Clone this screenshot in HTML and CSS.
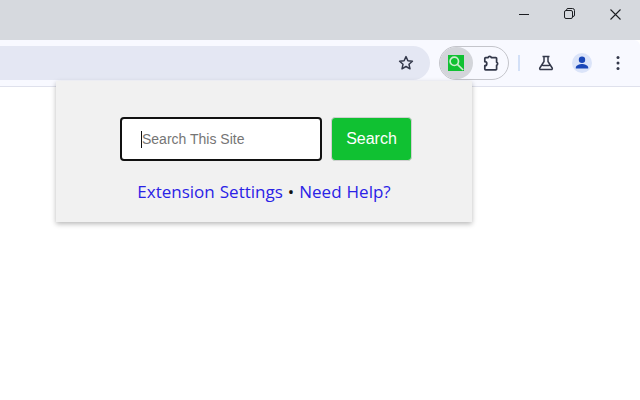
FILE: index.html
```html
<!DOCTYPE html>
<html lang="en">
<head>
<meta charset="utf-8">
<title>Search This Site</title>
<link rel="stylesheet" href="styles.css">
</head>
<body>
<div class="window">
  <header class="titlebar">
    <svg class="winbtn" width="46" height="28" viewBox="0 0 46 28"><path d="M19 14.5h10" fill="none" stroke="#1c1e22" stroke-width="1"/></svg>
    <svg class="winbtn" width="46" height="28" viewBox="0 0 46 28"><rect x="18.5" y="10.5" width="8" height="8" rx="1.5" fill="none" stroke="#1c1e22"/><path d="M20.5 10V9.8a1.5 1.5 0 0 1 1.5-1.3h4.5a2 2 0 0 1 2 2V15a1.5 1.5 0 0 1-1.5 1.5" fill="none" stroke="#1c1e22"/></svg>
    <svg class="winbtn" width="46" height="28" viewBox="0 0 46 28"><path d="M18.5 9.5l10 10M28.5 9.5l-10 10" fill="none" stroke="#1c1e22" stroke-width="1.1"/></svg>
  </header>
  <nav class="toolbar">
    <div class="omnibox">
      <svg width="16" height="16" viewBox="0 0 16 16"><path d="M8 1.6l1.9 4.2 4.5.5-3.4 3 1 4.5L8 11.5l-4 2.3 1-4.500-3.400-3 4.500-.5z" fill="none" stroke="#33384a" stroke-width="1.5" stroke-linejoin="round"/></svg>
    </div>
    <div class="pill">
      <div class="pill-active">
        <svg width="16" height="16" viewBox="0 0 16 16"><rect width="16" height="16" fill="#10c132"/><circle cx="6.3" cy="6.3" r="4.2" fill="none" stroke="#cdeccf" stroke-width="1.7"/><path d="M9.4 9.400l5.800 5.600" stroke="#cdeccf" stroke-width="1.700" fill="none"/></svg>
      </div>
      <div class="pill-ext">
        <svg width="18" height="18" viewBox="0 0 18 18"><path d="M2.600 3.600H5a1.800 1.800 0 0 1 3.400 0h4.400a.8.8 0 0 1 .8.8v3.800a1.600 1.600 0 0 1 0 3v3.800a.8.800 0 0 1-.8.800H2.600a.8.800 0 0 1-.8-.8v-3.300a2 2 0 0 0 0-4V4.400a.8.800 0 0 1 .8-.8z" fill="none" stroke="#33384a" stroke-width="1.700" stroke-linejoin="round"/></svg>
      </div>
    </div>
    <span class="divider"></span>
    <svg class="tool flask" width="18" height="18" viewBox="0 0 18 18"><path d="M5.500 2.500h7M7 2.500v5L2.800 14a1 1 0 0 0 .9 1.500h10.600a1 1 0 0 0 .9-1.500L11 7.500V2.500M5.500 11.500h7" fill="none" stroke="#33384a" stroke-width="1.500" stroke-linejoin="round"/></svg>
    <div class="avatar">
      <svg width="20" height="20" viewBox="0 0 20 20"><circle cx="10" cy="6.800" r="3.200" fill="#1a47b8"/><path d="M3.800 15.500v-1c0-2.300 3.800-3.500 6.200-3.500s6.200 1.200 6.200 3.500v1z" fill="#1a47b8"/></svg>
    </div>
    <svg class="tool menu" width="4" height="16" viewBox="0 0 4 16"><circle cx="2" cy="2.500" r="1.500" fill="#33384a"/><circle cx="2" cy="8" r="1.500" fill="#33384a"/><circle cx="2" cy="13.500" r="1.500" fill="#33384a"/></svg>
  </nav>
  <section class="popup">
    <form class="search-row">
      <div class="search-input"><span class="caret"></span><span class="placeholder">Search This Site</span></div>
      <button class="search-btn" type="button">Search</button>
    </form>
    <p class="links"><a href="#">Extension Settings</a> • <a href="#">Need Help?</a></p>
  </section>
</div>
</body>
</html>
```
FILE: styles.css
```css
* { box-sizing: border-box; }
html, body { margin: 0; padding: 0; background: #fff; }
.window { position: relative; width: 640px; height: 400px; overflow: hidden; background: #fff; }
.titlebar { height: 40px; background: #d6d9de; display: flex; justify-content: flex-end; align-items: flex-start; padding-right: 2px; }
.winbtn { display: block; }
.toolbar { height: 47px; background: #f8f9ff; border-bottom: 1px solid #dfe1ec; border-top-right-radius: 6px; display: flex; align-items: center; padding-bottom: 1px; }
.omnibox { width: 430px; height: 34px; background: #e4e7f3; border-radius: 0 17px 17px 0; display: flex; align-items: center; justify-content: flex-end; padding-right: 16px; }
.pill { margin-left: 9px; width: 70px; height: 34px; border: 1px solid #c4c5cb; border-radius: 17px; display: flex; align-items: center; }
.pill-active { width: 33px; height: 32px; border-radius: 16px; background: #d3d5da; display: flex; align-items: center; justify-content: center; padding-right: 1px; }
.pill-active svg { display: block; }
.pill-ext { flex: 1; display: flex; align-items: center; justify-content: center; padding-left: 3px; }
.pill-ext svg { display: block; }
.divider { width: 2px; height: 16px; background: #d3e0f7; margin-left: 9px; }
.tool { display: block; }
.flask { margin-left: 17px; }
.avatar { width: 20px; height: 20px; margin-left: 17px; border-radius: 50%; background: #dbe4f9; }
.avatar svg { display: block; }
.menu { margin-left: 24px; }
.popup { position: absolute; left: 56px; top: 81px; width: 416px; height: 141px; background: #f1f1f1; box-shadow: 0 2px 5px rgba(0,0,0,.28); display: flex; flex-direction: column; align-items: center; padding-top: 36px; }
.search-row { display: flex; gap: 9px; margin: 0 0 0 4px; }
.search-input { width: 202px; height: 44px; background: #fff; border: 2px solid #111; border-radius: 4px; display: flex; align-items: center; padding-left: 19px; font: 14px "Liberation Sans", Arial, sans-serif; color: #757575; }
.caret { width: 1px; height: 17px; background: #111; }
.search-btn { width: 81px; height: 44px; background: #10c132; border: 1px solid #d0d0d0; border-radius: 4px; color: #fff; font: 16px "Liberation Sans", Arial, sans-serif; padding: 0; }
.links { margin: 19px 0 0; font: 17px "Open Sans", sans-serif; word-spacing: 0.6px; line-height: 24px; color: #111; }
.links a { color: #2a22e6; text-decoration: none; }
```
